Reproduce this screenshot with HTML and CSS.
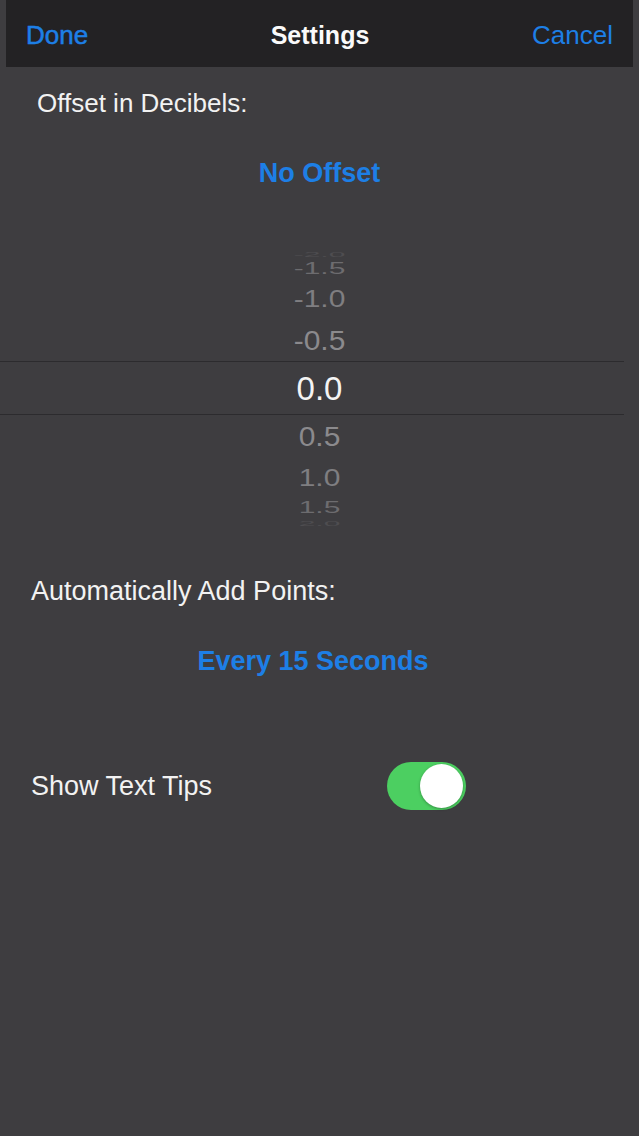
FILE: index.html
```html
<!DOCTYPE html>
<html lang="en">

<head>
    <meta charset="UTF-8">
    <link rel="stylesheet" href="styles.css">
</head>

<body>

    <div class="navbar">
        <span class="nav-btn nav-done">Done</span>
        <span class="nav-title">Settings</span>
        <span class="nav-btn nav-cancel">Cancel</span>
    </div>

    <div class="label label-offset">Offset in Decibels:</div>
    <div class="value">No Offset</div>

    <div class="picker">
        <div class="pick-row row-edge"><span>-2.0</span></div>
        <div class="pick-row row-far"><span>-1.5</span></div>
        <div class="pick-row row-mid"><span>-1.0</span></div>
        <div class="pick-row row-near row-near-top"><span>-0.5</span></div>
        <div class="pick-row row-selected"><span>0.0</span></div>
        <div class="pick-row row-near"><span>0.5</span></div>
        <div class="pick-row row-mid row-mid-low"><span>1.0</span></div>
        <div class="pick-row row-far"><span>1.5</span></div>
        <div class="pick-row row-edge"><span>2.0</span></div>
    </div>

    <div class="label label-auto">Automatically Add Points:</div>
    <div class="value value-auto">Every 15 Seconds</div>

    <div class="switch-row">
        <span class="switch-label">Show Text Tips</span>
        <span class="switch on"><span class="knob"></span></span>
    </div>

</body>

</html>
```

FILE: styles.css
```css
body {
    margin: 0;
    background-color: #3e3d40;
    font-family: "Liberation Sans", Arial, sans-serif;
    color: #f2f2f2;
    min-height: 1136px;
}

.navbar {
    margin: 0 6px;
    height: 67px;
    box-sizing: border-box;
    background-color: #232224;
    display: grid;
    grid-template-columns: 1fr auto 1fr;
    align-items: center;
    padding: 3px 20px 0 20px;
    font-size: 26px;
}

.nav-btn {
    color: #1d7fe6;
}

.nav-done {
    -webkit-text-stroke: 0.5px #1d7fe6;
}

.nav-cancel {
    justify-self: end;
}

.nav-title {
    font-weight: bold;
    font-size: 25px;
    color: #fafafa;
    padding-left: 1px;
}

.label {
    font-size: 27px;
    line-height: 30px;
    padding-left: 31px;
}

.label-offset {
    margin-top: 21px;
    padding-left: 37px;
    font-size: 26px;
}

.value {
    margin-top: 40px;
    font-size: 27px;
    line-height: 30px;
    font-weight: bold;
    color: #1d7fe6;
    text-align: center;
}

.value-auto {
    padding-right: 13px;
}

/* wheel picker */
.picker {
    margin-top: 62px;
    height: 277px;
    display: flex;
    flex-direction: column;
    overflow: hidden;
}

.pick-row {
    display: flex;
    align-items: center;
    justify-content: center;
    font-size: 30px;
    overflow: hidden;
    flex: none;
}

.pick-row span {
    display: inline-block;
    line-height: 1;
}

.row-edge {
    height: 8px;
    color: #4e4d50;
}

.row-edge span {
    transform: scaleY(0.25);
}

.row-far {
    height: 22px;
    color: #6d6c6f;
}

.row-far span {
    transform: scaleY(0.52);
}

.row-mid {
    height: 37px;
    color: #7f7e81;
}

.row-mid-low {
    height: 38px;
}

.row-mid span {
    transform: scaleY(0.77);
}

.row-near {
    height: 44px;
    color: #8b8a8d;
}

.row-near-top {
    padding-top: 4px;
    height: 40px;
}

.row-near span {
    transform: scaleY(0.92);
}

.row-selected {
    height: 52px;
    margin-right: 15px;
    border-top: 1px solid #2c2b2e;
    border-bottom: 1px solid #2c2b2e;
    font-size: 33px;
    color: #f4f4f4;
    padding-left: 15px;
}

.label-auto {
    margin-top: 49px;
}

.switch-row {
    margin-top: 86px;
    display: grid;
    grid-template-columns: 356px 79px;
    align-items: center;
    padding-left: 31px;
    height: 48px;
}

.switch-label {
    font-size: 27px;
}

.switch {
    display: flex;
    justify-content: flex-end;
    align-items: center;
    width: 79px;
    height: 48px;
    border-radius: 24px;
    box-sizing: border-box;
    padding: 2px 3px;
}

.switch.on {
    background-color: #4ccf61;
}

.knob {
    width: 43px;
    height: 44px;
    border-radius: 50%;
    background-color: #fff;
    box-shadow: 0 1px 3px rgba(0, 0, 0, 0.3);
}
```
